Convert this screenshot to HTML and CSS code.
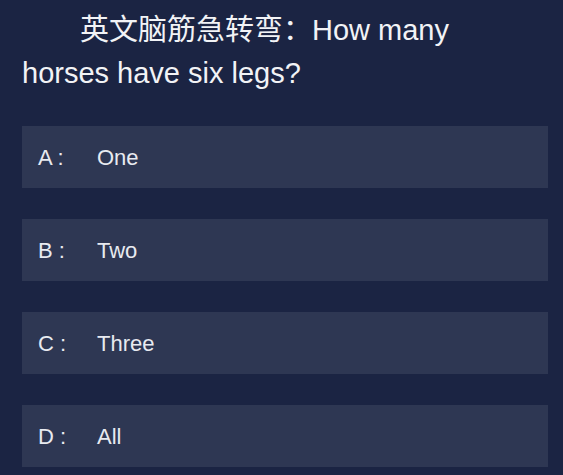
FILE: index.html
```html
<!DOCTYPE html>
<html lang="zh-CN">
<head>
  <meta charset="UTF-8" />
  <title>英文脑筋急转弯</title>
  <link rel="stylesheet" href="styles.css">
</head>
<body>

  <div class="quiz">
    <h1 class="question">英文脑筋急转弯：How many horses have six legs?</h1>

    <ul class="options">
      <li class="option"><span class="label">A :</span><span class="answer">One</span></li>
      <li class="option"><span class="label">B :</span><span class="answer">Two</span></li>
      <li class="option"><span class="label">C :</span><span class="answer">Three</span></li>
      <li class="option"><span class="label">D :</span><span class="answer">All</span></li>
    </ul>
  </div>

</body>
</html>
```

FILE: styles.css
```css
html, body {
  margin: 0;
  height: 100%;
  background-color: #1b2443;
  color: #f2f3f6;
  font-family: "Liberation Sans", Arial, "Noto Sans CJK SC", sans-serif;
}
.quiz {
  padding: 9px 15px 0 22px;
}
.question {
  margin: 0;
  padding-right: 20px;
  font-size: 29px;
  font-weight: normal;
  line-height: 43px;
  text-indent: 2em;
}
.options {
  list-style: none;
  margin: 31px 0 0;
  padding: 0;
  display: flex;
  flex-direction: column;
  gap: 31px;
}
.option {
  height: 62px;
  display: flex;
  align-items: center;
  padding-left: 16px;
  padding-top: 2px;
  box-sizing: border-box;
  background-color: #2e3753;
  font-size: 22px;
  color: #e8eaf0;
}
.label {
  width: 59px;
}
```
